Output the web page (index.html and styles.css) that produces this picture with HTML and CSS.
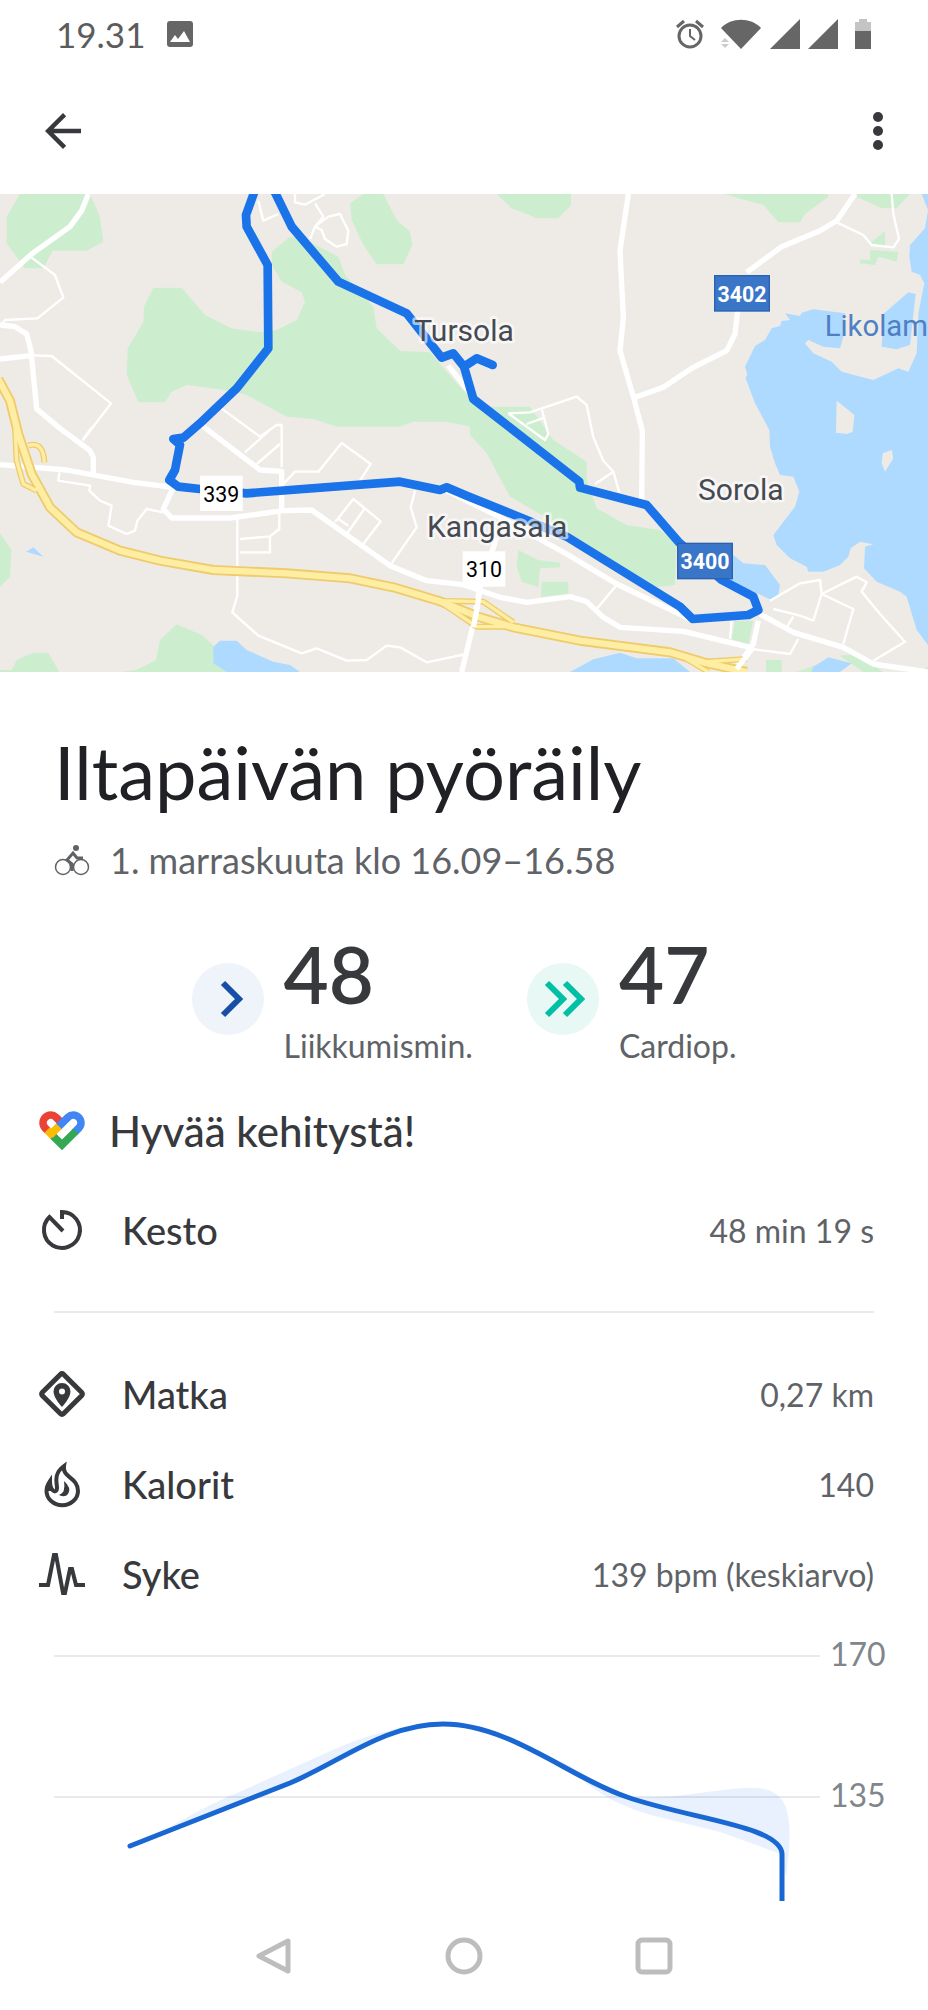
FILE: index.html
```html
<!DOCTYPE html>
<html lang="fi">
<head>
    <meta charset="UTF-8">
    <meta name="viewport" content="width=device-width, initial-scale=1.0">
    <title>Iltapäivän pyöräily</title>
    <link rel="stylesheet" href="styles.css">
</head>
<body>

<div class="status-bar">
    <span class="clock">19.31</span>
    <svg class="status-photo" width="26" height="26" viewBox="0 0 26 26"><rect width="26" height="26" rx="3" fill="#666"/><path d="M3 21l5-7 3 4 6-8 6 11z" fill="#fff"/></svg>
    <div class="status-icons">
        <svg width="28" height="30" viewBox="0 0 28 30" fill="none" stroke="#666" stroke-width="3"><circle cx="14" cy="17" r="11"/><path d="M14 10v7l5 4" stroke-width="2"/><path d="M1 8l7-6M27 8l-7-6"/></svg>
        <svg class="wifi" width="42" height="30" viewBox="0 0 42 30"><path d="M1 9C11-2 31-2 41 9L21 30z" fill="#666"/><path d="M1 23l4-4 4 4zM1 25l4 4 4-4z" fill="#ccc"/></svg>
        <svg width="30" height="30" viewBox="0 0 30 30"><path d="M0 30L30 0v30z" fill="#666"/></svg>
        <svg width="30" height="30" viewBox="0 0 30 30"><path d="M0 30L30 0v30z" fill="#666"/></svg>
        <svg class="battery" width="18" height="30" viewBox="0 0 18 30"><path d="M1 3h4V0h8v3h4v9H1z" fill="#c4c4c4"/><path d="M1 12h16v18H1z" fill="#666"/></svg>
    </div>
</div>

<header class="app-bar">
    <button class="icon-button" type="button" aria-label="Takaisin">
        <svg width="54" height="54" viewBox="0 0 24 24"><path d="M20 11H7.8l5.6-5.6L12 4l-8 8 8 8 1.4-1.4L7.8 13H20z" fill="#37393c"/></svg>
    </button>
    <button class="icon-button" type="button" aria-label="Lisää">
        <svg width="54" height="54" viewBox="0 0 54 54" fill="#37393c"><circle cx="27" cy="13" r="5"/><circle cx="27" cy="27" r="5"/><circle cx="27" cy="41" r="5"/></svg>
    </button>
</header>

<main>
    <svg class="map" viewBox="0 0 2784 1434" role="img" aria-label="Reitti kartalla">
        <rect width="2784" height="1434" fill="#eeebe7"/>

        <!-- parks and forest -->
        <g fill="#cceecf">
            <path d="M60 0L20 68V148L75 223H130L158 170H260L310 143L300 68L270 0z"/>
            <path d="M1090 0L1050 28L1055 78L1090 153L1130 211H1210L1237 153L1230 113L1190 78L1150 0z"/>
            <path d="M460 281H545L615 363L695 403L780 415L830 408L890 378L915 323L905 295L845 263L815 213V173L870 128L920 138L1015 188L1035 243L1120 338L1130 403L1200 470L1290 475L1380 578L1440 638H1590L1660 738L1760 803V858L1790 943L1880 993L1980 1008L2030 1048L2025 1173L1970 1180L1880 1138L1690 1020L1650 978L1530 908L1460 778L1410 723V698L1340 683H1240L1200 698H1010L940 675L860 668L740 603L690 590L560 573L515 593L495 625H415L380 543L383 463L430 383L432 338z"/>
            <path d="M1490 0L1535 43L1560 52L1610 73H1675L1713 33V0zM2170 0L2290 33L2335 85H2400L2415 60L2485 8V0zM2570 8L2645 43H2690L2730 0H2570zM2655 111L2610 148L2655 158zM2610 168L2695 173L2690 203L2635 188L2625 213L2580 208V196L2610 198z"/>
            <path d="M0 1018L35 1068L30 1148L0 1178zM0 1428H35L50 1398L100 1376H145L178 1434H0zM365 1434L410 1428L468 1398L480 1338L530 1291L605 1323L645 1358L700 1434z"/>
            <path d="M1555 1068L1615 1098L1680 1106V1120L1620 1123L1615 1180L1565 1163L1550 1118zM1625 1163H1705V1200L1623 1208zM2205 1280H2260L2245 1350L2195 1336zM2298 1398H2345V1434H2298zM2520 1385L2570 1380L2650 1434H2590zM2390 1434L2440 1416L2460 1434zM2750 1434L2784 1418V1434z"/>
        </g>

        <!-- water -->
        <g fill="#aedaff">
            <path d="M2784 0H2765L2784 48L2775 103L2730 153L2728 188L2735 233L2760 243L2773 268L2755 358L2750 478L2725 533L2695 523L2620 558L2525 533L2495 503L2440 478L2415 448L2425 438L2470 458L2520 463L2530 428L2535 358L2440 346L2405 356L2400 366L2355 358L2370 378L2345 381L2340 396L2315 403L2295 438L2265 456L2235 518L2242 540L2237 553L2265 628L2308 708L2310 758L2325 808L2340 843L2380 848L2398 893L2385 938L2320 1023L2330 1053L2370 1093L2420 1118L2425 1133H2470L2520 1113L2545 1088L2552 1063L2580 1043L2620 1051L2595 1058L2592 1123L2630 1163L2700 1193L2720 1208L2750 1308L2784 1353z"/>
            <path d="M2650 360L2725 295L2747 300L2730 453L2690 466L2645 458z"/>
            <path d="M2200 1083L2230 1108L2295 1113L2340 1173L2335 1203L2315 1218L2270 1198L2180 1158z"/>
            <path d="M78 1073L100 1060L130 1088zM640 1358L660 1340H710L740 1368L820 1403L870 1413L900 1434H680L640 1408zM1710 1434L1780 1396L1860 1376L1910 1393H2020L2070 1434zM2440 1418L2485 1390L2555 1408L2520 1434H2435z"/>
        </g>
        <path d="M2510 620L2545 648L2563 663L2558 713L2540 720L2508 716zM2675 768L2680 793L2655 833L2645 808L2648 778z" fill="#eeebe7"/>

        <!-- small streets -->
        <g fill="none" stroke="#fff" stroke-width="7" stroke-linejoin="round">
            <path d="M95 191L165 243L190 311L112 373L15 378L0 398M90 484L155 486L333 628L248 740M178 835L175 860L270 875L268 890L300 920L335 935L325 995L380 1020L405 1010L412 980L440 945L490 955M275 700L248 738"/>
            <path d="M775 20L790 80L835 60M885 0V25L915 32L975 0M945 28L970 68L945 98L930 135M945 98L985 68L1020 60L1045 110L1040 150L1010 158L975 135L965 108z"/>
            <path d="M660 640L780 728L830 693H845V820M810 708L735 775M840 750L770 810M850 870L885 833H955L1025 747L1112 810L1080 860M838 960V1005L810 1027V1075H720M720 1035L810 1027"/>
            <path d="M712 975V1205L697 1255L775 1325L905 1378L950 1363L1040 1400L1100 1398L1160 1355L1200 1360L1280 1405L1390 1382M1245 890L1232 940L1250 1000L1170 1115M1005 985L1060 915L1142 982L1090 1050M1040 1020L1095 942M1015 975L1045 995"/>
            <path d="M1525 658L1590 655L1730 608L1760 633L1780 730L1810 800L1840 833L1858 895M1840 833L1785 870M1525 658L1635 738L1645 720L1625 645M1580 690L1630 672M1790 1245L1850 1173"/>
            <path d="M2510 85L2590 123L2615 153L2680 160L2697 135L2680 60L2675 0M2310 1220L2400 1168L2460 1158L2465 1200L2570 1148L2600 1165L2585 1193L2640 1260L2715 1343L2620 1400M2320 1245L2400 1265L2440 1280L2465 1200L2560 1245L2530 1350M2380 1268L2360 1300M2255 1365L2370 1380L2395 1335M2195 1280L2190 1335M1380 1383H1398"/>
        </g>

        <!-- main roads -->
        <g fill="none" stroke="#fff" stroke-width="16" stroke-linejoin="round">
            <path d="M265 0L245 50L210 98L95 180L0 265M0 393L45 398L80 420L93 470L110 645L180 703L270 770L280 790V840M0 495L93 485"/>
            <path d="M0 812L200 828L400 865L520 880L490 945L515 972H690L850 950L935 948L1170 1115L1280 1160L1390 1172L1500 1210L1580 1225L1710 1208L1760 1223L1810 1270L1860 1300L2050 1312L2250 1360"/>
            <path d="M600 690L780 828L845 832V955"/>
            <path d="M1885 0L1860 170L1870 370L1860 470L1900 608L1927 710L1925 920M1900 612L1990 580L2080 520L2180 470L2205 420L2215 330M2240 235L2345 158L2460 110L2510 80L2565 0"/>
            <path d="M1340 890L1500 970L1700 1080L1850 1170L2080 1280M1345 515L1420 610M2280 1260L2380 1315L2530 1360L2620 1410L2784 1434M2275 1280L2260 1350L2200 1434M1490 1030L1440 1180L1420 1290L1385 1434"/>
        </g>

        <!-- motorway -->
        <g fill="none" stroke="#efcb6b" stroke-width="30" stroke-linejoin="round">
            <path d="M-5 555L30 620L55 720L95 840L150 940L230 1015L360 1070L480 1100L640 1128L860 1138L1050 1153L1180 1180L1320 1222L1440 1270L1540 1300L1740 1340L2010 1375L2110 1405L2240 1434"/>
            <path d="M45 700L50 800L70 870L110 890M85 755Q130 740 133 805M1300 1220L1450 1223L1540 1285M1330 1230L1430 1298L1560 1298M2060 1395L2125 1434M2090 1405L2240 1395" stroke-width="18"/>
        </g>
        <g fill="none" stroke="#fdeea4" stroke-width="19" stroke-linejoin="round">
            <path d="M-5 555L30 620L55 720L95 840L150 940L230 1015L360 1070L480 1100L640 1128L860 1138L1050 1153L1180 1180L1320 1222L1440 1270L1540 1300L1740 1340L2010 1375L2110 1405L2240 1434"/>
            <path d="M45 700L50 800L70 870L110 890M85 755Q130 740 133 805M1300 1220L1450 1223L1540 1285M1330 1230L1430 1298L1560 1298M2060 1395L2125 1434M2090 1405L2240 1395" stroke-width="10"/>
        </g>
        <path d="M1441 1175L1432 1240L1420 1300M2256 1365L2210 1425" fill="none" stroke="#fff" stroke-width="16"/>

        <!-- ridden route -->
        <g fill="none" stroke="#1a73e8" stroke-width="26" stroke-linejoin="round" stroke-linecap="round">
            <path d="M765 -12L738 63L740 98L803 213L805 463L710 583L600 688L550 731L520 735L540 752L525 828L508 858L535 878L600 885L740 898L1200 863L1320 888L1340 880L1400 905L1580 978L1700 1028L2040 1238L2078 1275L2245 1263L2275 1248L2260 1208L2165 1158L2035 1043L1940 933L1740 881L1738 863L1420 615L1392 518L1360 478L1325 491L1220 358L1015 263L875 98L820 -15"/>
            <path d="M1392 518L1430 493L1478 513"/>
        </g>

        <g class="place">
            <text x="1243" y="440">Tursola</text>
            <text x="1281" y="1030">Kangasala</text>
            <text x="2094" y="918">Sorola</text>
        </g>
        <text class="lake-name" x="2474" y="425">Likolam</text>

        <g class="road-sign">
            <rect x="600" y="845" width="128" height="106"/>
            <text x="664" y="923">339</text>
            <rect x="1388" y="1072" width="128" height="106"/>
            <text x="1452" y="1150">310</text>
        </g>
        <g class="road-sign regional">
            <rect x="2144" y="245" width="164" height="106"/>
            <text x="2226" y="323">3402</text>
            <rect x="2033" y="1048" width="164" height="106"/>
            <text x="2115" y="1126">3400</text>
        </g>
    </svg>

    <section class="summary">
        <h1>Iltapäivän pyöräily</h1>
        <p class="when">
            <svg width="36" height="32" viewBox="0 0 36 32" fill="none" stroke="#5f6368" stroke-width="1.5"><circle cx="9" cy="23" r="7.500"/><circle cx="27" cy="23" r="7.500"/><path d="M18 27v-7l-5-4 6-7 4 5h6" stroke-width="3"/><circle cx="22" cy="4" r="3" fill="#5f6368" stroke="none"/></svg>
            <span>1. marraskuuta klo 16.09–16.58</span>
        </p>
    </section>

    <section class="scores">
        <div class="score">
            <svg width="72" height="72" viewBox="0 0 72 72"><circle cx="36" cy="36" r="36" fill="#eff3fa"/><path d="M31 20l16 16-16 16" fill="none" stroke="#174ea6" stroke-width="6"/></svg>
            <div>
                <strong>48</strong>
                <span>Liikkumismin.</span>
            </div>
        </div>
        <div class="score">
            <svg width="72" height="72" viewBox="0 0 72 72"><circle cx="36" cy="36" r="36" fill="#e7f8f5"/><path d="M20 20l16 16-16 16M38 20l16 16-16 16" fill="none" stroke="#00bfa5" stroke-width="6"/></svg>
            <div>
                <strong>47</strong>
                <span>Cardiop.</span>
            </div>
        </div>
    </section>

    <h2 class="praise">
        <svg width="46" height="40" viewBox="0 0 45 39" fill="none" stroke-width="7.500">
            <path d="M9 19.600L6 16.600A7.500 7.500 0 0 1 16.600 6L23 12.400" stroke="#ea4335"/>
            <path d="M35 20.600L39 16.600A7.500 7.500 0 0 0 28.400 6L19 15.400" stroke="#4285f4"/>
            <path d="M13 23.600L22.500 33.100L36 19.600" stroke="#34a853"/>
            <path d="M8 18.600L14 24.600M11 23.400L19.500 14.900" stroke="#fbbc04"/>
        </svg>
        Hyvää kehitystä!
    </h2>

    <dl class="stats">
        <div class="stat">
            <dt>
                <svg width="48" height="48" viewBox="0 0 48 48" fill="none" stroke="#37393c" stroke-width="4"><path d="M24 13V6A18 18 0 1 1 11.500 11L25 25"/></svg>
                Kesto
            </dt>
            <dd>48 min 19 s</dd>
        </div>
        <hr>
        <div class="stat">
            <dt>
                <svg width="48" height="48" viewBox="0 0 48 48"><rect x="9" y="9" width="30" height="30" rx="2" transform="rotate(45 24 24)" fill="none" stroke="#37393c" stroke-width="5"/><path d="M24 13a8.500 8.500 0 0 0-8.500 8.500C15.500 28 24 37 24 37s8.500-9 8.500-15.500A8.500 8.500 0 0 0 24 13zm0 5.500a3 3 0 1 1 0 6 3 3 0 0 1 0-6z" fill="#37393c"/></svg>
                Matka
            </dt>
            <dd>0,27 km</dd>
        </div>
        <div class="stat">
            <dt>
                <svg width="48" height="48" viewBox="0 0 48 48"><path d="M26 6C24 18 40 17 40 31A15.500 14 0 0 1 8.500 31C8.500 27 10 24 12 21C12 32 19 34 19 28C19 23 15 14 26 6z" fill="none" stroke="#37393c" stroke-width="4"/><path d="M7 31Q8 22 13 18Q13 28 15 31zM26 21Q34 28 30 34Q27 38 21 35Q28 33 26 21z" fill="#37393c"/></svg>
                Kalorit
            </dt>
            <dd>140</dd>
        </div>
        <div class="stat">
            <dt>
                <svg width="48" height="48" viewBox="0 0 48 48" fill="none" stroke="#37393c" stroke-width="4"><path d="M1 35H10L16 5H18L25 43H27L32 19H34L38 35H47"/></svg>
                Syke
            </dt>
            <dd>139 bpm (keskiarvo)</dd>
        </div>
    </dl>

    <svg class="chart" viewBox="0 0 928 281" role="img" aria-label="Syke">
        <path d="M54 36H820M54 177H820" stroke="#e8eaed" stroke-width="2"/>
        <path class="range" d="M150 218C200 190 215 182 237 173L326 133Q365 115 400 108L345 139L290 163z"/>
        <path class="range" d="M559 140C590 168 610 183 651 195L720 212L781 234L786 257C795 190 788 168 752 168C715 168 680 180 627 177C600 165 575 148 559 140z"/>
        <path class="pulse" d="M130 226L290 163C340 142 385 104 443 104C510 104 570 158 627 177C690 199 781 206 782 234V281"/>
        <text x="830" y="46">170</text>
        <text x="830" y="187">135</text>
    </svg>
</main>

<nav class="system-nav">
    <button type="button" aria-label="Edellinen"><svg width="38" height="38" viewBox="0 0 38 38"><path d="M33 4V34L4 19z"/></svg></button>
    <button type="button" aria-label="Koti"><svg width="38" height="38" viewBox="0 0 38 38"><circle cx="19" cy="19" r="16"/></svg></button>
    <button type="button" aria-label="Viimeisimmät"><svg width="38" height="38" viewBox="0 0 38 38"><rect x="3" y="3" width="32" height="32" rx="4"/></svg></button>
</nav>

</body>
</html>
```

FILE: styles.css
```css
body {
    margin: 0;
    background: #fff;
    color: #37393c;
    font-family: Lato, "Liberation Sans", sans-serif;
}
svg {
    display: block;
    flex: none;
}
button {
    padding: 0;
    border: none;
    background: none;
    cursor: pointer;
}
.status-bar {
    display: flex;
    align-items: center;
    height: 68px;
    padding: 0 56px;
    color: #5c5c5c;
}
.clock {
    font-size: 35px;
    line-height: 48px;
}
.status-photo {
    margin-left: 22px;
}
.status-icons {
    display: flex;
    align-items: center;
    gap: 8px;
    margin-left: auto;
}
.wifi {
    margin-left: 8px;
}
.battery {
    margin-left: 8px;
}
.app-bar {
    display: flex;
    justify-content: space-between;
    align-items: center;
    height: 126px;
    padding: 0 23px 0 36px;
}
.map {
    width: 100%;
    height: auto;
}
.place {
    font: 90px Roboto, sans-serif;
    fill: #454a52;
    stroke: rgba(255, 255, 255, 0.6);
    stroke-width: 16px;
    stroke-linejoin: round;
    paint-order: stroke;
}
.lake-name {
    font: 88px Roboto, sans-serif;
    fill: #4f7fc4;
}
.road-sign {
    font: 64px Roboto, sans-serif;
    text-anchor: middle;
}
.road-sign rect {
    fill: #fff;
}
.regional {
    font-weight: 700;
    fill: #fff;
}
.regional rect {
    fill: #3a76c8;
    stroke: #2a62b0;
    stroke-width: 4px;
}
.summary {
    padding: 56px 54px 0;
}
h1 {
    margin: 0;
    color: #202124;
    font-size: 74px;
    font-weight: 400;
    line-height: 88px;
}
.when {
    display: flex;
    align-items: center;
    gap: 20px;
    margin: 20px 0 0;
    color: #5f6368;
    font-size: 36px;
    line-height: 48px;
}
.scores {
    display: flex;
    justify-content: center;
    gap: 54px;
    margin-top: 50px;
}
.score {
    display: flex;
    align-items: center;
    gap: 20px;
}
.score strong {
    display: block;
    font-size: 78px;
    font-weight: 600;
    line-height: 80px;
}
.score span {
    display: block;
    margin-top: 14px;
    color: #5f6368;
    font-size: 32px;
    line-height: 36px;
}
.praise {
    display: flex;
    align-items: center;
    gap: 24px;
    margin: 39px 0 0;
    padding: 0 39px;
    font-size: 42px;
    font-weight: 500;
    line-height: 56px;
}
.stats {
    margin: 26px 0 0;
    padding: 0 54px 0 38px;
}
.stat {
    display: flex;
    justify-content: space-between;
    align-items: center;
    height: 90px;
}
.stat dt {
    display: flex;
    align-items: center;
    gap: 36px;
    font-size: 38px;
    font-weight: 500;
}
.stat dd {
    margin: 0;
    color: #5f6368;
    font-size: 32px;
}
hr {
    height: 2px;
    margin: 36px 0 36px 16px;
    border: none;
    background: #e8eaed;
}
.chart {
    width: 100%;
    height: auto;
    margin-top: 1px;
    font-size: 32px;
    fill: #80868b;
}
.range {
    fill: #1a73e8;
    fill-opacity: 0.1;
}
.pulse {
    fill: none;
    stroke: #1967d2;
    stroke-width: 5px;
    stroke-linecap: round;
}
.system-nav {
    display: flex;
    justify-content: center;
    align-items: center;
    gap: 152px;
    height: 109px;
}
.system-nav svg {
    fill: none;
    stroke: #bdbdbd;
    stroke-width: 5px;
    stroke-linejoin: round;
}
```
